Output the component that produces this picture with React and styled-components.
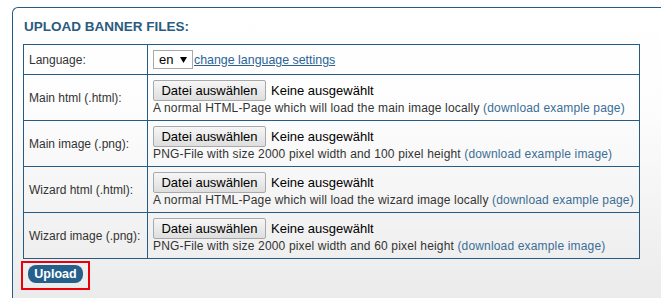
import React from 'react'
import styled, { createGlobalStyle } from 'styled-components'

const Global = createGlobalStyle`
  html, body {
    margin: 0;
    background: #fff;
    font-family: "Liberation Sans", Arial, sans-serif;
    overflow: hidden;
  }
`

const Page = styled.div`
  width: 661px;
  height: 298px;
  padding: 7px 0 0 12px;
  box-sizing: border-box;
  overflow: hidden;
`

const Panel = styled.div`
  width: 649px;
  height: 291px;
  border-left: 1px solid #255b85;
  border-top: 1px solid #255b85;
  border-top-left-radius: 6px;
  background: linear-gradient(#ffffff 0%, #fdfdfd 35%, #ebebeb 100%);
  padding: 12px 0 0 10px;
  box-sizing: border-box;
`

const Title = styled.h2`
  margin: 0 0 10px 1px;
  font-size: 13.5px;
  font-weight: bold;
  color: #2a5b80;
  line-height: 14px;
`

const Table = styled.table`
  width: 617px;
  border-collapse: collapse;
  font-size: 12px;
  color: #333;
`

const Row = styled.tr`
  height: ${p => p.$h}px;
`

const Label = styled.td`
  width: 113px;
  border: 1px solid #255b85;
  padding: 0 5px;
  vertical-align: middle;
`

const Cell = styled.td`
  border: 1px solid #255b85;
  padding: 5px 5px 4px 5px;
  vertical-align: top;
`

const Line = styled.div`
  display: flex;
  align-items: center;
  height: ${p => p.$h || 14}px;
  white-space: nowrap;
`

const Desc = styled(Line)`
  letter-spacing: 0.16px;
`

const Select = styled.div`
  display: flex;
  align-items: center;
  gap: 7px;
  padding-left: 5px;
  box-sizing: border-box;
  width: 40px;
  height: 19px;
  border: 1px solid #a9a9a9;
  background: #fff;
  font-size: 13px;
  color: #000;
`

const SettingsLink = styled.a`
  margin-left: 1px;
  color: #2a6496;
  text-decoration: underline;
  font-size: 12.4px;
`

const FileButton = styled.button`
  height: 21px;
  width: 113px;
  padding: 0;
  border: 1px solid #a9a9a9;
  border-radius: 2px;
  background: linear-gradient(#f6f6f6, #dedede);
  font-family: "Liberation Sans", Arial, sans-serif;
  font-size: 13px;
  color: #000;
`

const NoFile = styled.span`
  margin-left: 5px;
  font-size: 13px;
  color: #000;
`

const Hint = styled.span`
  color: #3b6e96;
`

const Footer = styled.div`
  margin: 2px 0 0 -2px;
`

const Highlight = styled.div`
  display: inline-block;
  border: 2px solid #e8000b;
  padding: 1px 5px 5px 5px;
`

const UploadButton = styled.button`
  height: 18px;
  width: 55px;
  padding: 0;
  border: none;
  border-radius: 8px;
  background: #255f8c;
  color: #fff;
  font-family: "Liberation Sans", Arial, sans-serif;
  font-weight: bold;
  font-size: 12.5px;
`

const files = [
  { label: 'Main html (.html):', desc: 'A normal HTML-Page which will load the main image locally', hint: '(download example page)' },
  { label: 'Main image (.png):', desc: 'PNG-File with size 2000 pixel width and 100 pixel height', hint: '(download example image)' },
  { label: 'Wizard html (.html):', desc: 'A normal HTML-Page which will load the wizard image locally', hint: '(download example page)' },
  { label: 'Wizard image (.png):', desc: 'PNG-File with size 2000 pixel width and 60 pixel height', hint: '(download example image)' },
]

const App = () => {
  return (
    <Page>
      <Global />
      <Panel>
        <Title>UPLOAD BANNER FILES:</Title>
        <Table>
          <tbody>
            <Row $h={30}>
              <Label>Language:</Label>
              <Cell>
                <Line $h={19}>
                  <Select>
                    en
                    <svg width="7" height="6" viewBox="0 0 7 6"><path d="M0 0h7L3.5 6z" fill="#000" /></svg>
                  </Select>
                  <SettingsLink>change language settings</SettingsLink>
                </Line>
              </Cell>
            </Row>
            {files.map(f => (
              <Row $h={46} key={f.label}>
                <Label>{f.label}</Label>
                <Cell>
                  <Line $h={21}>
                    <FileButton>Datei auswählen</FileButton>
                    <NoFile>Keine ausgewählt</NoFile>
                  </Line>
                  <Desc>
                    {f.desc}&nbsp;<Hint>{f.hint}</Hint>
                  </Desc>
                </Cell>
              </Row>
            ))}
          </tbody>
        </Table>
        <Footer>
          <Highlight>
            <UploadButton>Upload</UploadButton>
          </Highlight>
        </Footer>
      </Panel>
    </Page>
  )
}

export default App
